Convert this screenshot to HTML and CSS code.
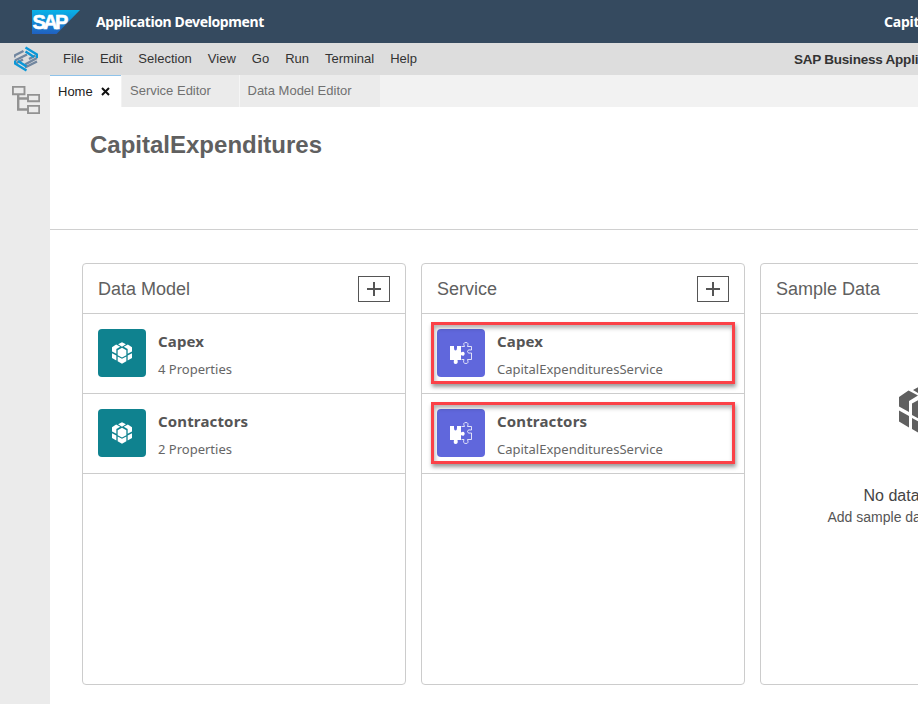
FILE: index.html
```html
<!DOCTYPE html>
<html lang="en">
<head>
<meta charset="utf-8">
<title>Application Development</title>
<link rel="stylesheet" href="styles.css">
</head>
<body>
<svg class="defs" width="0" height="0">
  <symbol id="cube" viewBox="0 0 46 50">
    <path d="M23 0 32 5 23 10.500 14 5ZM0 12 9.500 5.500 19 10.500 10 16V27L0 21.500ZM46 12 36.500 5.500 27 10.500 36 16V27L46 21.500ZM23 13 33 18.500V30L23 35.500 13 30V18.500ZM0 25.500 10 31V42.500L0 36.500ZM46 25.500 36 31V42.500L46 36.500ZM13 33 23 38.500 33 33V44L23 50 13 44Z"/>
  </symbol>
  <symbol id="puzzle" viewBox="0 0 24 24">
    <path fill="#fff" d="M1 5H5V7Q5 9.500 6.500 9.500 8 9.500 8 7V5H12V11.500Q13.500 10.500 15 11 16.500 12.500 15 14.500 13.500 15 12 14V19H8.500Q9.500 23 6.500 23 4 23 5 19H1Z"/>
    <path fill="none" stroke="#fff" stroke-width=".8" d="M12.500 5.500H15.500Q13.500 1.500 17 1.500 20 1.500 18.500 5.500H22.500V9Q18.500 8 18.500 10.500 18.500 13 22.500 12V18.500H18.500Q20 22.500 17 22.500 13.500 22.500 15 18.500H12.500"/>
  </symbol>
</svg>
<header class="shell">
  <svg class="sap" width="48" height="24" viewBox="0 0 48 24">
    <defs><linearGradient id="g" x1="0" y1="0" x2="0" y2="1"><stop offset="0" stop-color="#08b2e8"/><stop offset="1" stop-color="#2160c0"/></linearGradient></defs>
    <path fill="url(#g)" d="M0 0H48L24.500 24H0Z"/>
    <text x="0.500" y="19">SAP</text>
  </svg>
  <span class="app">Application Development</span>
  <span class="project">Capit</span>
</header>
<nav class="menu">
  <svg class="logo" width="24" height="26" viewBox="0 0 24 26">
    <g fill="none" stroke-width="2.400"><path stroke="#71869f" d="M.5 11.500V9.500L9.500 5M1 14.500 13 8.500M2.500 17 9 13.500M11 18.500 23 12M11 21.500 23 15.500M15 13 21.500 9.500"/><path stroke="#0a97d8" d="M11.500 1.500 23 8.500V12M11.500 5.500 20 11M1 14.500V17.500L12.500 24.500M4 15 12.500 20.500"/></g>
  </svg>
  <span>File</span><span>Edit</span><span>Selection</span><span>View</span><span>Go</span><span>Run</span><span>Terminal</span><span>Help</span>
  <b>SAP Business Applic</b>
</nav>
<div class="body">
  <aside>
    <svg width="28" height="28" viewBox="0 0 28 28"><g fill="none" stroke="#929292" stroke-width="1.900"><path d="M.900.900H12.500V8.200H.900ZM16 8.900H27.200V15.300H16ZM16 19.900H27.200V27.200H16Z"/><path stroke-width="2.400" d="M6.200 8.500V23.500H16M6.200 12.500H16"/></g></svg>
  </aside>
  <main>
    <div class="tabs">
      <div class="tab active">Home<svg width="9" height="9" viewBox="0 0 9 9"><path d="M1 1 8 8M8 1 1 8" stroke="#111" stroke-width="2"/></svg></div>
      <div class="tab t2">Service Editor</div>
      <div class="tab t3">Data Model Editor</div>
    </div>
    <div class="title"><h1>CapitalExpenditures</h1></div>
    <div class="cards">
      <section class="card">
        <div class="head"><h2>Data Model</h2><button aria-label="Add"><svg width="14" height="14"><path d="M0 7H14M7 0V14" stroke="#555" stroke-width="2"/></svg></button></div>
        <div class="row"><div class="icon teal"><svg width="20" height="22"><use href="#cube"/></svg></div><div class="label"><strong>Capex</strong><span>4 Properties</span></div></div>
        <div class="row"><div class="icon teal"><svg width="20" height="22"><use href="#cube"/></svg></div><div class="label"><strong>Contractors</strong><span>2 Properties</span></div></div>
      </section>
      <section class="card">
        <div class="head"><h2>Service</h2><button aria-label="Add"><svg width="14" height="14"><path d="M0 7H14M7 0V14" stroke="#555" stroke-width="2"/></svg></button></div>
        <div class="row marked"><div class="icon blue"><svg width="24" height="24"><use href="#puzzle"/></svg></div><div class="label"><strong>Capex</strong><span>CapitalExpendituresService</span></div></div>
        <div class="row marked"><div class="icon blue"><svg width="24" height="24"><use href="#puzzle"/></svg></div><div class="label"><strong>Contractors</strong><span>CapitalExpendituresService</span></div></div>
      </section>
      <section class="card">
        <div class="head"><h2>Sample Data</h2></div>
        <div class="empty"><svg width="46" height="50"><use href="#cube"/></svg><p class="e1">No data</p><p class="e2">Add sample da</p></div>
      </section>
    </div>
  </main>
</div>
</body>
</html>
```
FILE: styles.css
```css
*, *::after { box-sizing: border-box; }
body { margin: 0; width: 918px; height: 704px; overflow: hidden; background: #fff; font-family: "Liberation Sans", Arial, sans-serif; color: #555; white-space: nowrap; }
h1, h2, p { margin: 0; }
.defs { position: absolute; }
.shell { height: 43px; background: #354a5f; color: #fff; display: flex; align-items: center; padding-left: 32px; font: bold 14px "Noto Sans", sans-serif; }
.sap { flex: none; margin-top: 1px; }
.sap text { fill: #fff; font: bold 20px "Liberation Sans", sans-serif; letter-spacing: -2.7px; stroke: #fff; stroke-width: .6px; }
.app { margin-left: 16px; width: 788px; flex: none; letter-spacing: -.38px; }
.project { letter-spacing: -.2px; }
.menu { height: 32px; background: #ddd; display: flex; align-items: center; padding: 0 0 2px 14px; font-size: 13px; color: #333; }
.menu span { margin-right: 16px; flex: none; }
.logo { flex: none; margin: 2px 25px 0 0; }
.menu b { margin-left: 361px; font-size: 13.500px; letter-spacing: -.22px; padding-top: 2px; color: #333; }
.body { display: flex; height: 629px; }
aside { flex: none; width: 50px; background: #ebebeb; padding: 11px 0 0 12px; }
main { width: 868px; overflow: hidden; }
.tabs { height: 32px; background: #f2f2f2; display: flex; font-size: 13px; }
.tab { height: 32px; line-height: 32px; padding-left: 8px; background: #ebebeb; color: #707070; }
.active { width: 71px; line-height: 30px; background: #fff; color: #222; border-top: 1px solid #8fc3ea; display: flex; align-items: center; gap: 8px; }
.t2 { width: 118px; border-right: 1px solid #f5f5f5; margin-left: 1px; }
.t3 { width: 140px; padding-left: 7.500px; }
.title { height: 123px; border-bottom: 1px solid #d0d0d0; padding: 24px 0 0 40px; }
h1 { font-size: 24px; line-height: 28px; color: #606060; }
.cards { display: flex; gap: 15px; padding: 33px 0 0 32px; }
.card { flex: none; width: 324px; height: 422px; border: 1px solid #ccc; border-radius: 4px; }
.head { height: 50px; border-bottom: 1px solid #ccc; display: flex; align-items: center; justify-content: space-between; padding: 0 15px; }
h2 { font-size: 18px; font-weight: normal; color: #606060; padding-top: 2px; }
button { width: 32px; height: 26px; padding: 0; border: 1px solid #555; background: #fff; display: grid; place-items: center; }
.row { height: 80px; border-bottom: 1px solid #ccc; display: flex; padding: 15px; position: relative; }
.icon { width: 48px; height: 48px; border-radius: 4px; display: grid; place-items: center; flex: none; }
.teal { background: #0f828f; fill: #fff; }
.blue { background: #6067dc; }
.label { margin-left: 12px; display: flex; flex-direction: column; font: 13px/19px "Noto Sans", sans-serif; }
strong { font-size: 15px; line-height: 24px; letter-spacing: .15px; color: #555; }
.label span { margin-top: 7px; color: #666; }
.marked::after { content: ""; position: absolute; left: 9px; top: 8px; width: 304px; height: 62px; border: 3px solid #fb4147; box-shadow: 1px 3px 4px rgba(0,0,0,.4), inset 1px 3px 4px rgba(0,0,0,.3); }
.empty { padding: 71px 0 0 66px; fill: #606060; }
.empty svg { display: block; margin-left: 72px; }
.e1 { font-size: 16px; line-height: 20px; margin: 51px 0 0 36.500px; color: #444; }
.e2 { font-size: 14px; line-height: 20px; margin: 1px 0 0 .5px; }
```
